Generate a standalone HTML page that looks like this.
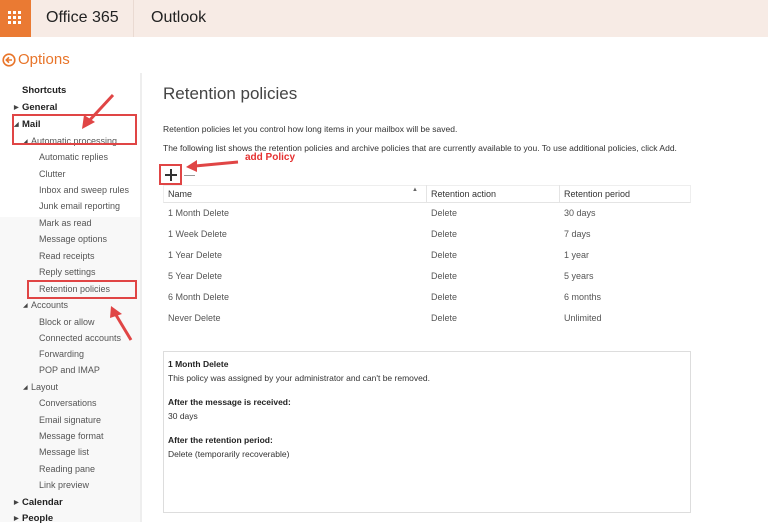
<!DOCTYPE html>
<html><head><meta charset="utf-8"><style>
*{margin:0;padding:0;box-sizing:border-box}
body{width:768px;height:522px;overflow:hidden;background:#fff;font-family:"Liberation Sans",sans-serif;position:relative;color:#333}
.a{position:absolute;white-space:nowrap}
.s{font-size:9px;color:#555}
.b{font-weight:bold;color:#222;font-size:9.5px}
.m{font-size:6px;color:#444;display:inline-block;width:8px;vertical-align:1px}
.box{position:absolute;border:2.5px solid #e04545}
</style></head><body>
<div class="a" style="left:0;top:0;width:768px;height:37px;background:#f7ebe5"></div>
<div class="a" style="left:0;top:0;width:31px;height:37px;background:#ea7a33"></div>
<svg class="a" style="left:8px;top:11px" width="14" height="14"><g fill="#fff"><rect x="0" y="0" width="3" height="3"/><rect x="5" y="0" width="3" height="3"/><rect x="10" y="0" width="3" height="3"/><rect x="0" y="5" width="3" height="3"/><rect x="5" y="5" width="3" height="3"/><rect x="10" y="5" width="3" height="3"/><rect x="0" y="10" width="3" height="3"/><rect x="5" y="10" width="3" height="3"/><rect x="10" y="10" width="3" height="3"/></g></svg>
<div class="a" style="left:46px;top:9px;font-size:16px;color:#222">Office 365</div>
<div class="a" style="left:151px;top:9px;font-size:16px;color:#222">Outlook</div>
<div class="a" style="left:133px;top:0;width:1px;height:37px;background:#eadad2"></div>
<svg class="a" style="left:2px;top:53px" width="14" height="14"><circle cx="7" cy="7" r="5.8" fill="none" stroke="#e8752a" stroke-width="1.6"/><path d="M10 7H4.5M7 4.3L4.3 7 7 9.7" fill="none" stroke="#e8752a" stroke-width="1.6"/></svg>
<div class="a" style="left:18px;top:51px;font-size:15px;color:#e8752a">Options</div>
<div class="a" style="left:0;top:217px;width:140px;height:305px;background:#f8f8f8"></div>
<div class="a" style="left:140px;top:73px;width:2px;height:449px;background:#eee"></div>
<div class="a b" style="left:22px;top:85px">Shortcuts</div>
<div class="a b" style="left:14px;top:102px"><span class="m">▶</span>General</div>
<div class="a b" style="left:14px;top:119px"><span class="m">◢</span>Mail</div>
<div class="a s" style="left:23px;top:136px"><span class="m">◢</span>Automatic processing</div>
<div class="a s" style="left:39px;top:152px">Automatic replies</div>
<div class="a s" style="left:39px;top:169px">Clutter</div>
<div class="a s" style="left:39px;top:185px">Inbox and sweep rules</div>
<div class="a s" style="left:39px;top:201px">Junk email reporting</div>
<div class="a s" style="left:39px;top:218px">Mark as read</div>
<div class="a s" style="left:39px;top:234px">Message options</div>
<div class="a s" style="left:39px;top:251px">Read receipts</div>
<div class="a s" style="left:39px;top:267px">Reply settings</div>
<div class="a s" style="left:39px;top:284px">Retention policies</div>
<div class="a s" style="left:23px;top:300px"><span class="m">◢</span>Accounts</div>
<div class="a s" style="left:39px;top:317px">Block or allow</div>
<div class="a s" style="left:39px;top:333px">Connected accounts</div>
<div class="a s" style="left:39px;top:349px">Forwarding</div>
<div class="a s" style="left:39px;top:365px">POP and IMAP</div>
<div class="a s" style="left:23px;top:382px"><span class="m">◢</span>Layout</div>
<div class="a s" style="left:39px;top:398px">Conversations</div>
<div class="a s" style="left:39px;top:415px">Email signature</div>
<div class="a s" style="left:39px;top:431px">Message format</div>
<div class="a s" style="left:39px;top:447px">Message list</div>
<div class="a s" style="left:39px;top:464px">Reading pane</div>
<div class="a s" style="left:39px;top:480px">Link preview</div>
<div class="a b" style="left:14px;top:497px"><span class="m">▶</span>Calendar</div>
<div class="a b" style="left:14px;top:513px"><span class="m">▶</span>People</div>
<div class="box" style="left:12px;top:114px;width:125px;height:31px"></div>
<div class="box" style="left:27px;top:280px;width:110px;height:19px"></div>
<svg class="a" style="left:0;top:0" width="768" height="522"><g stroke="#e04545" stroke-width="3" fill="#e04545">
<line x1="113" y1="95" x2="88" y2="122"/><polygon points="82,129 84,115 95,122" stroke="none"/>
<line x1="131" y1="340" x2="116" y2="315"/><polygon points="111,306 122,314 110,318" stroke="none"/>
<line x1="238" y1="162" x2="195" y2="166"/><polygon points="186,167 197,160 197,172" stroke="none"/></g></svg>
<div class="a" style="left:163px;top:84px;font-size:17px;color:#444">Retention policies</div>
<div class="a s" style="left:163px;top:124px;color:#333;font-size:8.5px">Retention policies let you control how long items in your mailbox will be saved.</div>
<div class="a s" style="left:163px;top:143px;color:#333;font-size:8.5px">The following list shows the retention policies and archive policies that are currently available to you. To use additional policies, click Add.</div>
<div class="a" style="left:245px;top:152px;font-size:10px;font-weight:bold;color:#e53030">add Policy</div>
<div class="box" style="left:159px;top:164px;width:23px;height:21px"></div>
<svg class="a" style="left:164px;top:168px" width="14" height="14"><path d="M7 1V13M1 7H13" stroke="#333" stroke-width="2"/></svg>
<div class="a" style="left:184px;top:175px;width:11px;height:1px;background:#999"></div>
<div class="a" style="left:163px;top:185px;width:528px;height:18px;border:1px solid #eee;border-bottom-color:#e4e4e4"></div>
<div class="a" style="left:426px;top:185px;width:1px;height:18px;background:#e4e4e4"></div>
<div class="a" style="left:559px;top:185px;width:1px;height:18px;background:#e4e4e4"></div>
<div class="a s" style="left:168px;top:189px;color:#333">Name</div>
<div class="a" style="left:412px;top:187px;font-size:6px;color:#666">▲</div>
<div class="a s" style="left:431px;top:189px;color:#333">Retention action</div>
<div class="a s" style="left:564px;top:189px;color:#333">Retention period</div>
<div class="a s" style="left:168px;top:208px">1 Month Delete</div><div class="a s" style="left:431px;top:208px">Delete</div><div class="a s" style="left:564px;top:208px">30 days</div>
<div class="a s" style="left:168px;top:229px">1 Week Delete</div><div class="a s" style="left:431px;top:229px">Delete</div><div class="a s" style="left:564px;top:229px">7 days</div>
<div class="a s" style="left:168px;top:250px">1 Year Delete</div><div class="a s" style="left:431px;top:250px">Delete</div><div class="a s" style="left:564px;top:250px">1 year</div>
<div class="a s" style="left:168px;top:271px">5 Year Delete</div><div class="a s" style="left:431px;top:271px">Delete</div><div class="a s" style="left:564px;top:271px">5 years</div>
<div class="a s" style="left:168px;top:292px">6 Month Delete</div><div class="a s" style="left:431px;top:292px">Delete</div><div class="a s" style="left:564px;top:292px">6 months</div>
<div class="a s" style="left:168px;top:313px">Never Delete</div><div class="a s" style="left:431px;top:313px">Delete</div><div class="a s" style="left:564px;top:313px">Unlimited</div>
<div class="a" style="left:163px;top:351px;width:528px;height:162px;border:1px solid #ddd"></div>
<div class="a b" style="left:168px;top:359px;font-size:8.5px">1 Month Delete</div>
<div class="a s" style="left:168px;top:373px;color:#333;font-size:8.5px">This policy was assigned by your administrator and can't be removed.</div>
<div class="a b" style="left:168px;top:397px;font-size:8.5px">After the message is received:</div>
<div class="a s" style="left:168px;top:411px;color:#333;font-size:8.5px">30 days</div>
<div class="a b" style="left:168px;top:435px;font-size:8.5px">After the retention period:</div>
<div class="a s" style="left:168px;top:449px;color:#333;font-size:8.5px">Delete (temporarily recoverable)</div>
</body></html>
